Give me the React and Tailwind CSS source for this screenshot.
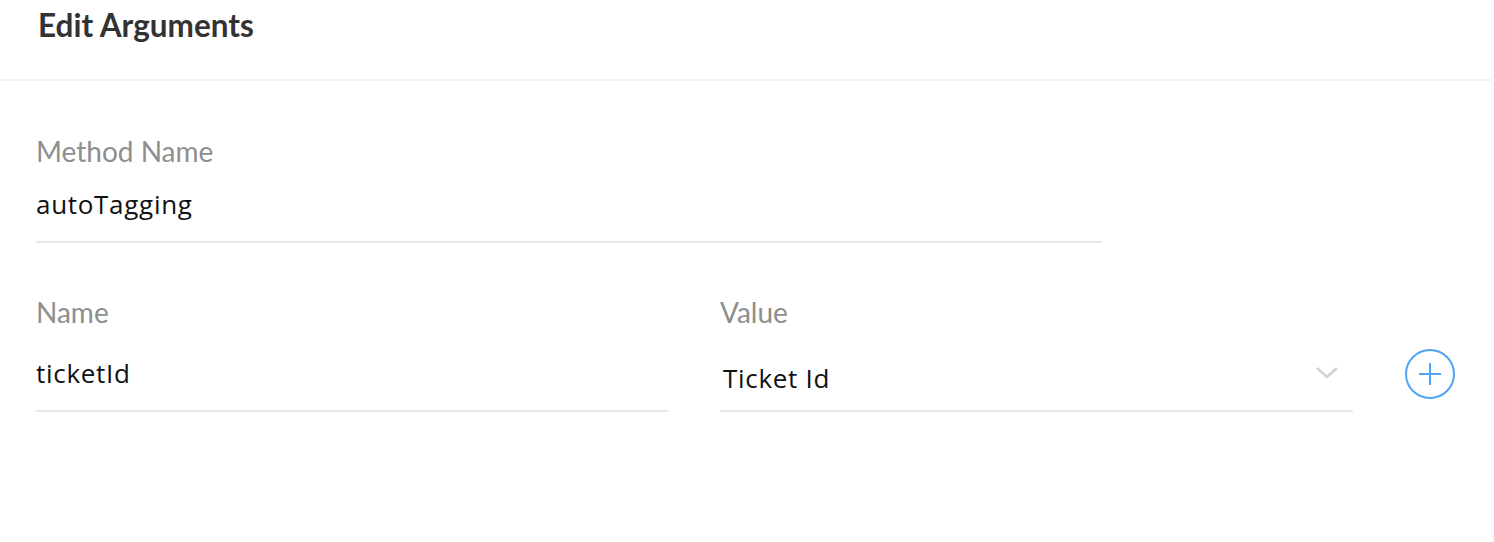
import React from "react";

function Field({ label, value, className = "", valueGap, valuePad, right = null }) {
  return (
    <div className={className}>
      <div className="text-[28px] leading-none text-[#8e8e8e]">{label}</div>
      <div className={"flex items-start border-b-2 border-[#e6e6eb] " + valueGap + " " + valuePad}>
        <div className="flex-1 font-['Open_Sans',sans-serif] text-[26px] leading-none tracking-[0.7px] text-[#111]">{value}</div>
        {right}
      </div>
    </div>
  );
}

export default function App() {
  return (
    <div className="flex h-[542px] w-full bg-white font-['Lato',sans-serif]">
      <div className="flex-1">
        <div className="h-[81px] border-b-2 border-[#f1f1f1] px-[38px] pt-[10px]">
          <h1 className="text-[31.5px] font-bold leading-none text-[#333]">Edit Arguments</h1>
        </div>
        <div className="px-[36px] pt-[56px]">
          <Field label="Method Name" value="autoTagging" className="w-[1066px]" valueGap="mt-[26px]" valuePad="pb-[24px]" />
          <div className="mt-[55px] flex items-start">
            <Field label="Name" value="ticketId" className="w-[632px]" valueGap="mt-[34px]" valuePad="pb-[24px]" />
            <Field
              label="Value"
              value={<span className="pl-[3px]">Ticket Id</span>}
              className="ml-[52px] w-[633px]"
              valueGap="mt-[39px]"
              valuePad="pb-[19px]"
              right={
                <svg width="24" height="14" viewBox="0 0 24 14" className="mr-[14px] mt-[1px]">
                  <path d="M2 2l10 9 10-9" fill="none" stroke="#d2d2d2" strokeWidth="2.6" />
                </svg>
              }
            />
            <button className="ml-[52px] mt-[51px] flex h-[50px] w-[50px] items-center justify-center rounded-full border-2 border-[#4ea4f4]">
              <svg width="24" height="24" viewBox="0 0 24 24">
                <path d="M12 1v22M1 12h22" stroke="#4ea4f4" strokeWidth="2" />
              </svg>
            </button>
          </div>
        </div>
      </div>
      <div className="w-[12px] bg-[#fafafa]" />
    </div>
  );
}
